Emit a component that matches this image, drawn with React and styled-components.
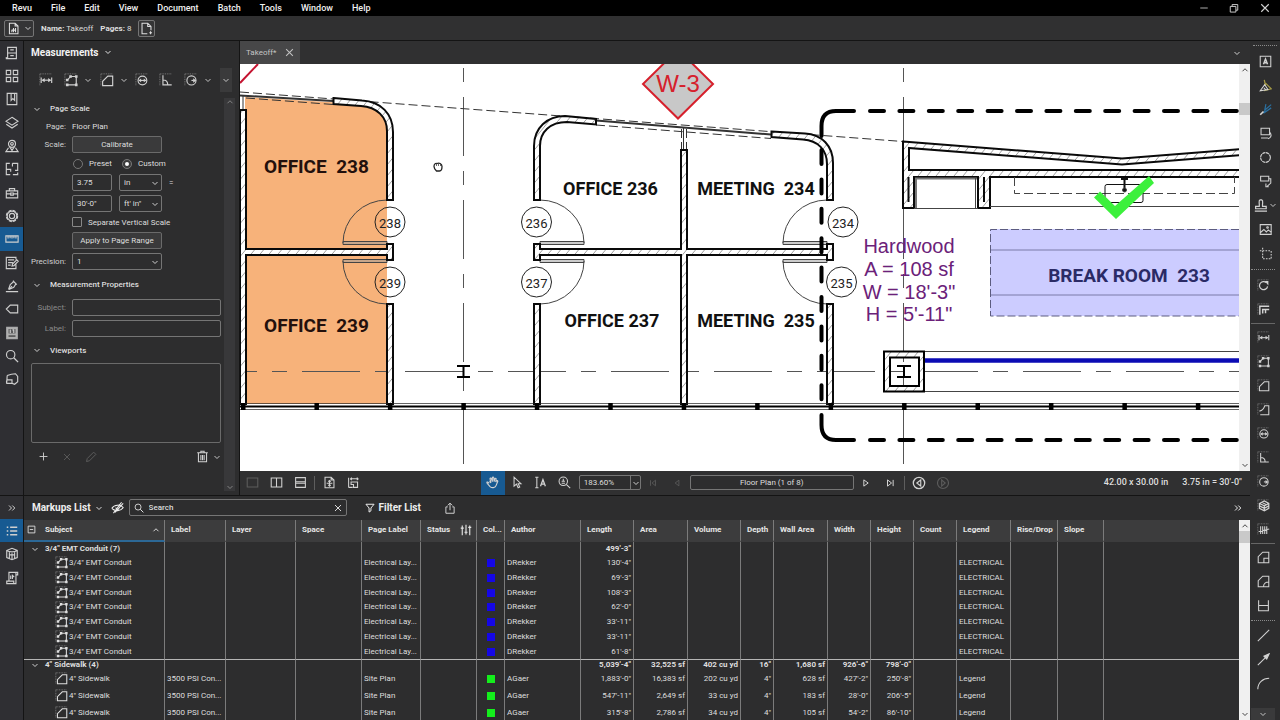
import React, { useState } from 'react';
import styled, { createGlobalStyle, css } from 'styled-components';

const colors = {
  bg: '#2d2d2e',
  bar: '#303031',
  head: '#3c3c3d',
  line: '#141414',
  grid: '#7b7b7b',
  field: '#757575',
  text: '#dedede',
  dim: '#8a8a8a',
  active: '#175a92',
};

const GlobalStyle = createGlobalStyle`
  * { box-sizing: border-box; }
  body {
    margin: 0;
    background: ${colors.bg};
    color: ${colors.text};
    font: 8px/11px Roboto, "Liberation Sans", sans-serif;
    overflow: hidden;
  }
  button, input, select { font: inherit; color: inherit; margin: 0; }
`;

/* ---------- icons ---------- */

const dots = <path d="M1 1H15M1 1V15" strokeDasharray="1 1" strokeWidth="1" opacity=".55" />;

const icons = {
  cabinet: <path d="M3 1.500H13V14.500H3ZM3 8H13M6 4.500H10M6 11H10M1.500 12.500V14.500H3" />,
  grid: <path d="M1.500 1.500H6.500V6.500H1.500ZM9.500 1.500H14.500V6.500H9.500ZM1.500 9.500H6.500V14.500H1.500ZM9.500 9.500H14.500V14.500H9.500Z" />,
  bookmark: <path d="M2.500 1.500H13.500V14.500H2.500ZM7 1.500V9.500L9 7.500L11 9.500V1.500" />,
  layers: <path d="M8 1.500L15 6L8 10.500L1 6ZM1.500 9.500L8 13.800L14.500 9.500" />,
  pin: (
    <>
      <circle cx="8" cy="5.500" r="4" />
      <circle cx="8" cy="5.500" r="1.500" />
      <path d="M5 8.500L8 13L11 8.500M4 10L1 14.500H15L12 10" />
    </>
  ),
  spaces: <path d="M5.500 1.500H1.500V14.500H6M1.500 8.500H6.500V11M8.500 1.500H14.500V9.500H11.500M8.500 1.500V5M14.500 12V14.500H9" />,
  toolbox: <path d="M1.500 5.500H14.500V13.500H1.500ZM5 5.500V3H11V5.500M1.500 9H6.500M9.500 9H14.500M6.500 8V10.500H9.500V8Z" />,
  gear: (
    <>
      <circle cx="8" cy="8" r="6.300" strokeDasharray="3.500 1.450" strokeWidth="1.600" />
      <circle cx="8" cy="8" r="5.500" />
      <circle cx="8" cy="8" r="3" />
    </>
  ),
  ruler: <path d="M1 4.500H15V11.500H1ZM3.500 4.500V7.500M5.800 4.500V7M8 4.500V7.500M10.200 4.500V7M12.500 4.500V7.500" />,
  form: <path d="M12.500 9.500V14.500H1.500V1.500H12.500V4M3.500 4.500H10.500M3.500 7.500H9M3.500 10.500H6.500M8 11.500L8.500 9.300L13.500 4.300L15.200 6L10.200 11Z" />,
  sign: <path d="M1 14.500H15M4 12L6 6.500L10 3L12.500 5.500L10 9.500L4.500 12M5 11.500L8 8M9 2L13.500 6.500" />,
  tag: <path d="M6 3.500H14.500V12.500H6L1.500 8Z" />,
  film: (
    <>
      <rect x="2" y="1.500" width="12" height="13" fill="currentColor" opacity=".8" />
      <path d="M4 3.500H12V8.500H4Z" fill="#5a5a5c" stroke="none" />
      <path d="M4 11.500H12" stroke="#2d2d2e" />
      <path d="M6 4V8M8.500 4.500H10V8" />
    </>
  ),
  search: (
    <>
      <circle cx="6.500" cy="6.500" r="4.800" />
      <path d="M10 10L15 15" strokeWidth="1.500" />
    </>
  ),
  shape: <path d="M2.500 4C5 3 9 2 12 2L14.500 5V11L11 14L8 13V9H3C1.500 9 1.500 11 2 13H8M2 12L2.500 4" />,
  length: <>{dots}<path d="M2.500 5V11.500M14.500 5V11.500" /><path d="M4 8.200H13" /><path d="M3 8.200L6.500 5.800V10.600ZM14 8.200L10.500 5.800V10.600Z" fill="currentColor" stroke="none" /></>,
  polylength: (
    <>
      {dots}
      <path d="M4 8L7.500 4H14V13.500H4" />
      <path d="M2.200 6.500H5.200V9.500H2.200ZM6 2.500H9V5.500H6ZM12.500 2.500H15.500V5.500H12.500ZM12.500 12H15.500V15H12.500ZM2.200 12H5.200V15H2.200Z" fill="currentColor" stroke="none" />
    </>
  ),
  area: <>{dots}<path d="M3 14.500V9.500L9 3.500H14.500V14.500Z" /></>,
  perimeter: <>{dots}<path d="M3 10C7 9 8.500 7 9.500 3.500H14.500V14.500H4" /></>,
  diameter: <>{dots}<circle cx="8.500" cy="8.500" r="5" /><path d="M5 8.500H12" /><path d="M4 8.500L7 6.300V10.700ZM13 8.500L10 6.300V10.700Z" fill="currentColor" stroke="none" /></>,
  angle: <>{dots}<path d="M4.500 2.500V13.500H14.500M4.500 8C8 8 10 10 10 13.500" /></>,
  radius: <>{dots}<circle cx="8.500" cy="8.500" r="5.200" /><path d="M8.500 8.500H11" /><path d="M14 8.500L10.500 6V11Z" fill="currentColor" stroke="none" /></>,
  volume: <>{dots}<path d="M3 5.500L9 2.500L14.500 5.500V11.500L9 14.500L3 11.500ZM3 5.500L9 8.500L14.500 5.500M9 8.500V14.500M3 8.500L9 11.500L14.500 8.500M6 4L11.500 7" strokeWidth="1.500" /></>,
  count: <>{dots}<path d="M4.500 4V13.500M7 4V13.500M9.500 4V13.500M12 4V13.500M2 10.500L15 7.500" strokeWidth="1.300" /></>,
  cutout: <path d="M1.500 14.500V7L7 1.500H14.500V14.500ZM8.500 14V9H14.500" />,
  cutarc: <path d="M1.500 14.500V7L7 1.500H14.500V14.500ZM8 14C8 11 11 8.500 14 8.500" />,
  tray: <path d="M2 1.500V14.500H14V1.500M2 8H14" />,
  textbox: <><path d="M1.500 1.500H14.500V14.500H1.500Z" /><path d="M5.500 11.500L8 5L10.500 11.500M6.500 9.500H9.500" strokeWidth="1.800" /></>,
  highlight: (
    <>
      <path d="M6.500 1L8 8M8 5L15 12L6 14.500" stroke="#a59a45" strokeWidth="1.500" />
      <path d="M1.500 14.500L7 7L11 13ZM6 11L8 13" />
    </>
  ),
  pen: <><path d="M15 2L8 8L5.500 12.500L15 6M8.500 1.500L7 9" stroke="#2a6f9f" strokeWidth="1.500" /><path d="M1.500 14.500L5.500 10.500" strokeWidth="2" /></>,
  rect: <path d="M2.500 1.500H13V9.500H2.500ZM2.500 13.500H11M13 6C15.500 9 16 13 11 14.500" />,
  ellipse: <circle cx="8" cy="8" r="6" strokeDasharray="4 .7" strokeWidth="1.400" />,
  callout: <path d="M2 1.500H12V7.500H2ZM12 4.500H14.500V10L10 14M8.500 10.500V14.500H12" />,
  stamp: <path d="M7.500 1C5 2 7 5 6.500 9H2V12H15V9H10.500C10 5 12 2 9.500 1ZM1 15H16" strokeWidth="1.500" />,
  image: <><path d="M1.500 2H15V14H1.500ZM1.500 12L6 8L9 11L11.500 8.500L15 11.500" /><circle cx="10.500" cy="5.500" r="1" /></>,
  crop: <path d="M1 4.500H15M4.500 1V14.500H15V4.500" strokeDasharray="2 1.500" />,
  rotate: <>{dots}<path d="M11.500 4.500A5 5 0 1 0 13 9" strokeWidth="1.500" /><path d="M9.500 2.500H14V8Z" fill="currentColor" stroke="none" /></>,
  align: <>{dots}<path d="M3.500 14.500V4H15M7 13V8H15M10.500 8V12.500" strokeWidth="1.800" /></>,
  line: <path d="M1 15L15 1" />,
  arrow: <><path d="M1 15L11 5" /><path d="M15 1L8.500 4L12 7.500Z" fill="currentColor" /></>,
  arc: <path d="M1 15C1 7 7 1.500 15 1.500" />,
  page: <path d="M1.500 2.500H14.500V13.500H1.500Z" />,
  splitv: <path d="M1.500 2.500H14.500V13.500H1.500ZM8 2.500V13.500" />,
  splith: <path d="M2 2H14V14H2ZM2 7H14M2 9H14" />,
  fit: <path d="M2.500 1.500H10L13.500 5V14.500H2.500ZM10 1.500V5H13.500M8 5.500V12.500M4.500 9H11.500M6.500 7L8 5.500L9.500 7M6.500 11L8 12.500L9.500 11" />,
  fitw: <path d="M2 2V14M2 14H7M4 3.500H14M4 3.500L6 2M4 3.500L6 5M14 3.500L12 2M14 3.500L12 5M5 7.500H13V14H8V10.500H5Z" />,
  hand: <path d="M4 9L2 7.500C1 7 .8 8.500 1.500 9L5 13C7 15 11.500 15 12.500 11.500L14.500 6.500C14.500 5.500 13 5.200 12.500 6.500L12 7.500L12.500 3.500C12.300 2.500 11 2.500 10.800 3.500L10 7L9.500 2C9.300 1 8 1 7.800 2V7L6.500 3C6 2 4.800 2.500 5 3.500L6 8.500L4.500 6" fill="#175a92" strokeWidth="1.400" />,
  cursor: <path d="M5 1.500V12.500L8 10L10 14.500L12 13.500L10 9.500H13.500Z" />,
  textsel: <><path d="M1.500 1.500H5.500M3.500 1.500V14.500M1.500 14.500H5.500" /><path d="M8 12.500L11 4.500L14 12.500M9 10H13" strokeWidth="1.600" /></>,
  zoom: <><circle cx="6.500" cy="6.500" r="5.200" /><path d="M10.500 10.500L15 15M4.500 6.500H8.500M4.500 9H8.500M6.500 3.500V6" /></>,
  first: <path d="M4 3.500V12.500M12 3.500V12.500L6.500 8Z" />,
  prev: <path d="M11 3.500V12.500L5 8Z" />,
  next: <path d="M4.500 3V13L11.500 8Z" strokeWidth="1.600" />,
  last: <path d="M13 3V13M4 3V13L10.500 8Z" strokeWidth="1.600" />,
  back: <><circle cx="8" cy="8" r="6.500" strokeWidth="1.500" /><path d="M10 4.500V11.500L5.500 8Z" /></>,
  forward: <><circle cx="8" cy="8" r="6.300" /><path d="M6.500 4.500V11.500L10.500 8Z" /></>,
  chevron: <path d="M3 6L8 11L13 6" strokeWidth="1.800" />,
  up: <path d="M3 10.500L8 5.500L13 10.500" strokeWidth="1.800" />,
  close: <path d="M2 2L14 14M14 2L2 14" strokeWidth="1.800" />,
  minimize: <path d="M2 8H14" />,
  restore: <path d="M2 5.500H11V14.500H2ZM5 5.500V2.500H14V11.500H11" strokeWidth="1.500" />,
  list: <path d="M1 3H3M5.500 3H15M1 8H3M5.500 8H15M1 13H3M5.500 13H15" strokeWidth="2" />,
  cube: <path d="M2 4L8 1.500L14 4V12L8 14.500L2 12ZM2 4C5 6 11 6 14 4M5 6V13M8 7V14M11 6V13M5.500 9H10.500" />,
  script: <path d="M4.500 11V1.500H14.500V4.500H12.500V14.500H2V11.500H10V14.500M12.500 4.500V1.500M6.500 5V9M8.500 9V5L10.500 7" />,
  eyeoff: <path d="M1 9C4 4 12 4 15 8C12 13 5 13 1 9M3 15L13 1.500M6 8C6 11 10 11 10 8M5 14L15 3" />,
  filter: <path d="M1.500 2H14.500L9.500 8V12.500L6.500 14.500V8Z" strokeWidth="1.600" />,
  share: <path d="M5 6.500H2.500V15H13.500V6.500H11M8 11V1.500M5 4.500L8 1.500L11 4.500" />,
  sliders: <path d="M3 2V15M8 1V14M13 2V15M1 5.500H5M6 11H10M11 4.500H15" strokeWidth="1.500" />,
  minusbox: <path d="M2 2H14V14H2ZM5 8H11" strokeWidth="1.500" />,
  plus: <path d="M8 1V15M1 8H15" strokeWidth="1.600" />,
  pencil: <path d="M2 14L3 10L11.500 1.500L14.500 4.500L6 13Z" />,
  trash: <path d="M1.500 3.500H14.500M6 3.500V1.500H10V3.500M3 3.500V14.500H13V3.500M6 6V12.500M8 6V12.500M10 6V12.500" />,
  more: <path d="M2 3L7 8L2 13M8.500 3L13.500 8L8.500 13" strokeWidth="2" />,
  docset: <path d="M3 1.500H10L13.500 5V14.500H3ZM10 1.500V5H13.500M6 12.500V9.500M8 12.500V7.500M10.500 12.500V7.500M6 10H10.500" />,
  newpage: <path d="M9 14.500H2.500V1.500H9.500L13.500 5.500V10M9.500 1.500V5.500H13.500M13 11.500V15M11.500 13.200H14.800" />,
};

const Svg = styled.svg`
  flex: none;
  display: block;
  fill: none;
  stroke: currentColor;
  stroke-width: 1.3;
`;

const Icon = ({ name, size = 14 }) => (
  <Svg width={size} height={size} viewBox="0 0 16 16" aria-hidden="true">
    {icons[name]}
  </Svg>
);

/* ---------- shared parts ---------- */

const Window = styled.div`
  display: flex;
  flex-direction: column;
  height: 100vh;
`;

const Spacer = styled.div`
  flex: ${(p) => p.$grow || 1};
`;

const PlainButton = styled.button`
  display: flex;
  align-items: center;
  justify-content: center;
  gap: 4px;
  flex: none;
  padding: 0;
  border: 0;
  background: none;
  cursor: pointer;
`;

const IconButton = styled(PlainButton)`
  width: ${(p) => p.$width || 24}px;
  height: ${(p) => p.$height || 24}px;
  background: ${(p) => (p.$active ? colors.active : 'transparent')};
  color: ${(p) => (p.$dim ? '#5c5c5c' : '#d2d2d2')};
`;

const BoxButton = styled(PlainButton)`
  height: 17px;
  border: 1px solid ${colors.field};
  border-radius: 2px;
  background: #353536;
`;

const Divider = styled.div`
  flex: none;
  width: 1px;
  height: 14px;
  margin: 0 2px;
  background: #5e5e5e;
`;

/* ---------- menu and document bar ---------- */

const MenuBar = styled.nav`
  display: flex;
  align-items: center;
  gap: 19px;
  flex: none;
  height: 16px;
  padding-left: 12px;
  background: #000;
  color: #f0f0f0;
  font-size: 9px;
  font-weight: 500;
`;

const WindowButtons = styled.div`
  display: flex;
  margin-left: auto;
`;

const DocBar = styled.header`
  display: flex;
  align-items: center;
  gap: 7px;
  flex: none;
  height: 25px;
  padding-left: 4px;
  border-bottom: 1px solid ${colors.line};
  background: ${colors.bar};
`;

const DocMenu = styled(BoxButton)`
  width: 30px;
`;

const AddPage = styled(BoxButton)`
  width: 17px;
`;

/* ---------- body layout ---------- */

const Body = styled.div`
  display: flex;
  flex: 1;
  min-height: 0;
`;

const Left = styled.div`
  display: flex;
  flex-direction: column;
  flex: 1;
  min-width: 0;
`;

const Upper = styled.div`
  display: flex;
  flex: 1;
  min-height: 0;
`;

const Lower = styled.div`
  display: flex;
  flex: 0 0 225px;
  min-height: 0;
  border-top: 1px solid ${colors.line};
`;

const Rail = styled.aside`
  display: flex;
  flex-direction: column;
  flex: 0 0 24px;
  border-right: 1px solid ${colors.line};
  background: #2f2f33;
`;

const RailButton = styled(PlainButton)`
  height: 23px;
  color: #cfcfcf;
  background: ${(p) => (p.$active ? colors.active : 'none')};
  &:nth-child(3n) {
    height: 24px;
  }
`;

/* ---------- measurements panel ---------- */

const Panel = styled.section`
  display: flex;
  flex-direction: column;
  flex: 0 0 216px;
  border-right: 1px solid ${colors.line};
`;

const PanelTitle = styled.h2`
  display: flex;
  align-items: center;
  gap: 6px;
  height: 22px;
  margin: 0;
  padding-left: 7px;
  font-size: 10px;
  font-weight: 700;
  color: #f2f2f2;
`;

const ToolRow = styled.div`
  display: flex;
  align-items: center;
  height: 33px;
  padding-left: 12px;
  > button {
    gap: 6px;
  }
`;

const More = styled(IconButton)`
  background: #3a3a3b;
`;

const PanelBody = styled.div`
  display: flex;
  flex: 1;
  min-height: 0;
`;

const PanelForm = styled.form`
  flex: 1;
  min-width: 0;
  padding: 0 3px 0 7px;
`;

const PanelScroll = styled.div`
  display: flex;
  flex-direction: column;
  justify-content: space-between;
  align-items: center;
  width: 11px;
  margin: 2px 4px 4px 0;
  background: #38383a;
  color: ${colors.dim};
`;

const SectionTitle = styled.h3`
  display: flex;
  align-items: center;
  gap: 9px;
  height: ${(p) => p.$height}px;
  margin: 0;
  padding-left: 2px;
  font-size: 8px;
  font-weight: 500;
`;

const Rows = styled.div`
  display: flex;
  flex-direction: column;
  gap: 4px;
`;

const Row = styled.div`
  display: grid;
  grid-template-columns: 35px 1fr;
  align-items: center;
  column-gap: 6px;
  height: ${(p) => p.$height || 17}px;
`;

const RowLabel = styled.label`
  justify-self: end;
  white-space: nowrap;
  color: ${(p) => (p.$dim ? colors.dim : '#d0d0d0')};
`;

const Field = styled.div`
  grid-column: 2;
  display: flex;
  align-items: center;
  gap: ${(p) => p.$gap || 7}px;
`;

const fieldBox = css`
  height: 17px;
  border: 1px solid ${colors.field};
  border-radius: 2px;
  background: ${colors.bg};
  outline: 0;
`;

const TextField = styled.input`
  ${fieldBox}
  width: ${(p) => p.$width || '40px'};
  padding: 0 4px;
`;

const SelectWrap = styled.span`
  display: grid;
  align-items: center;
  width: ${(p) => p.$width}px;
  > * {
    grid-area: 1 / 1;
  }
  > svg {
    justify-self: end;
    margin-right: 3px;
    pointer-events: none;
  }
`;

const SelectBox = styled.select`
  ${fieldBox}
  width: 100%;
  padding: 0 4px;
  appearance: none;
`;

const Select = ({ width, options, ...rest }) => (
  <SelectWrap $width={width}>
    <SelectBox {...rest}>
      {options.map((o) => <option key={o}>{o}</option>)}
    </SelectBox>
    <Icon name="chevron" size={8} />
  </SelectWrap>
);

const WideButton = styled(BoxButton)`
  width: 90px;
  border-color: #6a6a6a;
  background: #3a3a3b;
`;

const Choice = styled.label`
  display: flex;
  align-items: center;
  gap: 6px;
  white-space: nowrap;
`;

const Radio = styled.input`
  appearance: none;
  width: 10px;
  height: 10px;
  margin: 0 0 0 1px;
  border: 1px solid #777;
  border-radius: 50%;
  &:checked {
    border: 3px solid #3c3c3c;
    outline: 1px solid #777;
    outline-offset: -1px;
    background: #fff;
  }
`;

const Check = styled.input`
  appearance: none;
  width: 10px;
  height: 10px;
  margin: 0;
  border: 1px solid #888;
  border-radius: 1px;
`;

const Viewports = styled.div`
  height: 80px;
  border: 1px solid #6a6a6a;
  border-radius: 2px;
`;

const EditRow = styled.div`
  display: flex;
  align-items: center;
  height: 27px;
`;

/* ---------- document area ---------- */

const DocArea = styled.main`
  display: flex;
  flex-direction: column;
  flex: 1;
  min-width: 0;
`;

const Tabs = styled.div`
  display: flex;
  align-items: center;
  flex: none;
  height: 23px;
  padding-right: 9px;
  background: ${colors.bar};
`;

const Tab = styled.div`
  display: flex;
  align-items: center;
  gap: 9px;
  height: 23px;
  padding: 0 6px;
  background: #474748;
  color: #c4c4c4;
`;

const Viewer = styled.div`
  display: flex;
  flex: 1;
  min-height: 0;
  background: #fff;
`;

const Plan = styled.svg`
  flex: 1;
  min-width: 0;
  height: 100%;
`;

const ScrollBar = styled.div`
  display: flex;
  flex-direction: column;
  align-items: center;
  flex: 0 0 11px;
  background: #f0f0f0;
  color: #333;
  padding: 2px 0;
  > :last-child {
    margin-top: auto;
  }
`;

const Thumb = styled.div`
  flex: 0 0 12px;
  width: 100%;
  margin-top: ${(p) => p.$gap}px;
  background: #c9c9c9;
`;

const StatusBar = styled.footer`
  display: flex;
  align-items: center;
  flex: none;
  height: 24px;
  padding: 0 8px 1px 0;
  background: ${colors.bar};
`;

const PageBox = styled.input`
  ${fieldBox}
  height: 15px;
  width: 164px;
  margin-left: 1px;
  text-align: center;
`;

const ZoomSelect = styled(SelectWrap)`
  margin: 0 0 0 2px;
  ${SelectBox} {
    height: 15px;
  }
`;

const ZoomArrow = styled.span`
  justify-self: end;
  display: flex;
  align-items: center;
  height: 15px;
  padding: 0 1px;
  border-left: 1px solid ${colors.field};
  pointer-events: none;
`;

const Info = styled.span`
  margin-left: 14px;
  white-space: nowrap;
  font-size: 9px;
  font-weight: 500;
`;

const PlanLabel = styled.text`
  font: 700 ${(p) => p.$size || 19}px Roboto, "Liberation Sans", sans-serif;
  fill: ${(p) => p.$fill || '#111'};
  text-anchor: middle;
`;

const DoorNumber = styled.text`
  font: 13px Roboto, "Liberation Sans", sans-serif;
  fill: #222;
  text-anchor: middle;
`;

const Note = styled.text`
  font: ${(p) => p.$size || 20}px "Liberation Sans", sans-serif;
  fill: ${(p) => p.$fill || '#6b2179'};
  text-anchor: middle;
`;

// x, y, width, height of every straight wall
const walls = [
  [240, 110, 6, 294],
  [240, 249, 152, 6],
  [387, 244, 6, 16],
  [387, 304, 6, 100],
  [534, 244, 6, 16],
  [534, 304, 6, 100],
  [534, 249, 299, 6],
  [681, 150, 6, 254],
  [827, 244, 6, 16],
  [827, 304, 6, 100],
  [903, 170, 340, 7],
  [903, 142, 6, 34],
  [903, 170, 11, 38],
  [978, 170, 12, 38],
];

const curvedWalls = [
  'M333.5 98L362 100.500C381 101.500 393 114 393 132V200H387V131C387 117 377 107 361 106L333.500 104Z',
  'M534 200V146C534 128 547 116 565 116L596 119V124.500L567 122C550 122 540 132 540 146V200Z',
  'M771.500 131.500L805 133.500C822 134.500 833 146 833 163V200H827V164C827 150 818 140.500 803 139.500L771.500 137Z',
  'M903 141.500L1122 158.500L1243 149V155L1122 164.500L903 147.500Z',
];

const doors = [
  { x: 387, dir: -1 },
  { x: 540, dir: 1 },
  { x: 827, dir: -1 },
];

const tags = [
  [390, 222, '238'], [390, 282, '239'], [536.5, 222, '236'],
  [536.5, 282, '237'], [843, 222, '234'], [841.5, 282, '235'],
];

const mullions = Array.from({ length: 14 }, (_, i) => 243 + i * 73.45);

const FloorPlan = () => (
  <Plan viewBox="240 64 999 407" preserveAspectRatio="xMinYMin slice" role="img" aria-label="Floor plan">
    <defs>
      <pattern id="hatch" width="9" height="11" patternUnits="userSpaceOnUse">
        <rect width="9" height="11" fill="#fff" />
        <path d="M0 11L9 0M-4.500 5.500L4.500 -5.500M4.500 16.500L13.500 5.500" stroke="#888" strokeWidth=".8" />
      </pattern>
    </defs>

    <path d="M245 97L361 104C377 105 387 117 387 131V404H245Z" fill="#f7b27a" />
    <rect x="990" y="229" width="260" height="87" fill="#ccccff" />

    {/* column centre lines */}
    <g stroke="#555" strokeWidth="1" fill="none">
      <path d="M463.500 68V464M903.500 68V464" strokeDasharray="14 15 59 15" />
      <path d="M463.500 409V464M903.500 409V464" />
      <path d="M169 371.500H1239" strokeDasharray="15 15 58 15" />
    </g>

    {/* glazing line */}
    <g stroke="#333" fill="none">
      <path d="M240 92L903 141.500M246 98L333 104.500M596 125L771 138.500M681.500 129V150M686.500 129V150" strokeDasharray="9 4" />
      <path d="M240 95.500L333 101M596 120.500L771 134.500" strokeWidth="2" />
      <path d="M683.500 128V150M243 96V110" />
    </g>

    {doors.map(({ x, dir }) => (
      <g key={x} stroke="#444" fill="none">
        <path d={`M${x} 200A44 43 0 0 ${dir > 0 ? 1 : 0} ${x + 44 * dir} 243M${x} 304A44 43 0 0 ${dir > 0 ? 0 : 1} ${x + 44 * dir} 261`} />
        <path d={`M${x} 241.500H${x + 44 * dir}V244.500H${x}ZM${x} 259.500H${x + 44 * dir}V262.500H${x}Z`} fill="#999" fillOpacity=".5" />
      </g>
    ))}

    {/* walls: outlines first, then the fill on top so that joints stay open */}
    <g fill="#fff" stroke="#0a0a0a" strokeWidth="2">
      {walls.map(([x, y, w, h]) => <rect key={`${x}-${y}-${w}`} x={x} y={y} width={w} height={h} />)}
      {curvedWalls.map((d) => <path key={d} d={d} fill="url(#hatch)" />)}
    </g>
    <g fill="url(#hatch)">
      {walls.map(([x, y, w, h]) => (
        <rect key={`${x}-${y}-${w}`} x={x + 1} y={y + 1} width={w - 2} height={h - 2} />
      ))}
    </g>
    <path d="M908.500 177V202M984 177V202" stroke="#0a0a0a" strokeWidth="2" />

    {/* outside wall */}
    <g stroke="#222">
      <path d="M240 403.500H1239M240 409.500H1239" strokeWidth=".7" />
      <path d="M240 406.500H1239" strokeWidth="2" stroke="#000" />
    </g>
    {mullions.map((x) => <rect key={x} x={x - 2} y="403" width="4.500" height="7" />)}

    {/* counter and sink */}
    <g fill="none" stroke="#444">
      <path d="M916 208V178.500H977" stroke="#777" strokeWidth="2" />
      <path d="M975.500 178V208M914 208.500H978M990 206.500H1239" />
      <path d="M1014.500 177V193.500H1234.500V177" strokeDasharray="9 4" />
      <rect x="1105" y="184.500" width="38" height="18" rx="2" stroke="#111" />
      <path d="M1121 179H1128M1124.500 179V190" stroke="#111" strokeWidth="2" />
      <circle cx="1124.500" cy="190" r="2" fill="#111" />
    </g>
    <path d="M1094 197.500L1100 191.500L1115 206L1149 176L1154 183L1116 219Z" fill="#3cf03c" />

    <g fill="none" stroke="#7b7ba8">
      <path d="M990 250H1239M990 295H1239" />
      <path d="M1239 229.500H990.500V316H1239" strokeDasharray="8 3" stroke="#5c5c80" />
    </g>

    {/* steel columns */}
    <path fillRule="evenodd" d="M884 351.500H924V391.500H884ZM890 357.500H919V386H890Z" fill="url(#hatch)" stroke="#000" strokeWidth="2" />
    <path d="M457 366H470M463.500 366V377M457 377H470M897 366H911M904 366V377M897 377H911" stroke="#000" strokeWidth="2" fill="none" />
    <path d="M925 351.500H1239M925 391.500H1239" stroke="#444" />
    <path d="M925 360.500H1239" stroke="#0b0bb4" strokeWidth="4.500" />

    {/* match line */}
    <g fill="none" stroke="#000" strokeWidth="4" strokeLinecap="round">
      <path d="M821.500 136V126Q821.500 111 836 111H854M821.500 415V425Q821.500 440 836 440H854" />
      <path d="M821.500 150V400M870 111H1239M870 440H1239" strokeDasharray="14 15.400" />
    </g>

    <path d="M240 83L258 64" stroke="#c4122f" strokeWidth="2" />
    <path d="M678 49.500L713 84L678 118.500L643 84Z" fill="#c8c8c8" stroke="#d6202c" strokeWidth="2" />
    <Note x="678" y="92" $size={24} $fill="#d6202c">W-3</Note>

    {tags.map(([x, y, n]) => (
      <g key={n}>
        <circle cx={x} cy={y} r="15" fill="none" stroke="#222" />
        <DoorNumber x={x} y={y + 5.5}>{n}</DoorNumber>
      </g>
    ))}

    <PlanLabel x="316.500" y="172.500" $fill="#23100c">{'OFFICE\u00a0 238'}</PlanLabel>
    <PlanLabel x="316.500" y="331.500" $fill="#23100c">{'OFFICE\u00a0 239'}</PlanLabel>
    <PlanLabel x="610.500" y="195" $size={18}>OFFICE 236</PlanLabel>
    <PlanLabel x="612" y="326.500" $size={18}>OFFICE 237</PlanLabel>
    <PlanLabel x="756" y="195" $size={18}>{'MEETING\u00a0 234'}</PlanLabel>
    <PlanLabel x="756" y="326.500" $size={18}>{'MEETING\u00a0 235'}</PlanLabel>
    <PlanLabel x="1129" y="281.500" $fill="#2b2b66">{'BREAK ROOM\u00a0 233'}</PlanLabel>

    <Note x="909" y="253">Hardwood</Note>
    <Note x="909" y="276">A = 108 sf</Note>
    <Note x="909" y="298.500">W = 18'-3"</Note>
    <Note x="909" y="321">H = 5'-11"</Note>

    <path d="M434 166.500C434 164 435.500 163 437 163.500C439 162.500 442 163.500 442 166.500C442 169 441 171 439.500 171H436.500C435.500 170 434 168.500 434 166.500Z" fill="#fff" stroke="#222" strokeWidth="1.300" />
    <path d="M436.500 163.500V166M438.500 163V166M440.500 163.500V166" stroke="#444" strokeWidth=".8" />
  </Plan>
);

/* ---------- markups list ---------- */

const Markups = styled.section`
  display: flex;
  flex-direction: column;
  flex: 1;
  min-width: 0;
`;

const MarkupsBar = styled.div`
  display: flex;
  align-items: center;
  flex: none;
  height: 24px;
  padding: 0 8px 1px;
  font-size: 10px;
  font-weight: 700;
  color: #ededed;
`;

const MarkupsTitle = styled(PlainButton)`
  gap: 4px;
  margin-right: 8px;
`;

const SearchBox = styled.label`
  display: flex;
  align-items: center;
  gap: 5px;
  width: 218px;
  height: 17px;
  margin: 0 18px 0 5px;
  padding: 0 4px;
  border: 1px solid ${colors.field};
  border-radius: 2px;
`;

const SearchInput = styled.input`
  flex: 1;
  min-width: 0;
  padding: 0;
  border: 0;
  background: none;
  outline: 0;
  font-size: 8px;
  font-weight: 500;
  &::placeholder {
    color: #dcdcdc;
  }
`;

const ShareButton = styled(IconButton)`
  margin-left: 17px;
`;

const TableArea = styled.div`
  display: flex;
  flex: 1;
  min-height: 0;
`;

const TableClip = styled.div`
  flex: 1;
  min-width: 0;
  overflow: hidden;
  background: linear-gradient(${colors.head} 22px, ${colors.bg} 22px);
`;

const Table = styled.table`
  width: 100%;
  table-layout: fixed;
  border-collapse: separate;
  border-spacing: 0;
  font-size: 8px;
  line-height: 10px;
  white-space: nowrap;
`;

const Th = styled.th`
  height: 22px;
  padding: 0 2px 1px 6px;
  border-right: 1px solid ${colors.grid};
  border-bottom: 2px solid ${(p) => (p.$sorted ? '#2c6896' : 'transparent')};
  text-align: left;
  font-weight: 700;
  overflow: hidden;
  color: #e6e6e6;
  &:last-child {
    border-right: 0;
  }
`;

const HeadCell = styled.div`
  display: flex;
  align-items: center;
  justify-content: space-between;
  padding-right: 2px;
  > span {
    display: flex;
    align-items: center;
    gap: 9px;
  }
`;

const SubjectHead = styled(HeadCell)`
  margin-left: -3px;
`;

const Tr = styled.tr`
  height: ${(p) => p.$height}px;
  font-weight: ${(p) => (p.$group ? 700 : 400)};
  ${(p) => p.$alternate && css`
    &:nth-child(5) {
      height: 14px;
    }
  `}
`;

const Td = styled.td`
  padding: 0 2px;
  border-right: 1px solid ${colors.grid};
  border-top: ${(p) => (p.$rule ? '1px solid #b5b5b5' : '0')};
  text-align: ${(p) => p.$align || 'left'};
  overflow: hidden;
  line-height: 10px;
  &:last-child {
    border-right: 0;
  }
`;

const Subject = styled.div`
  display: flex;
  align-items: center;
  gap: ${(p) => (p.$group ? 6 : 1)}px;
  height: 10px;
  padding-left: ${(p) => (p.$group ? 5 : 29)}px;
`;

const Swatch = styled.div`
  width: 8px;
  height: 8px;
  margin: 0 auto;
  background: ${(p) => p.$color};
`;

const columns = [
  ['Subject', 141], ['Label', 61], ['Layer', 70], ['Space', 66], ['Page Label', 59], ['Status', 56],
  ['Col...', 28], ['Author', 76], ['Length', 53], ['Area', 54], ['Volume', 53], ['Depth', 33],
  ['Wall Area', 54], ['Width', 43], ['Height', 43], ['Count', 43], ['Legend', 54],
  ['Rise/Drop', 47], ['Slope', 46], ['', 0],
];

const conduit = (length) => ({ 'Page Label': 'Electrical Lay...', 'Col...': '#1507e6', Author: 'DRekker', Length: length, Legend: 'ELECTRICAL' });

const sidewalk = (Length, Area, Volume, wall, Width, Height) => ({
  Label: '3500 PSI Con...', 'Page Label': 'Site Plan', 'Col...': '#14ee1c', Author: 'AGaer',
  Length, Area, Volume, Depth: '4"', 'Wall Area': wall, Width, Height, Legend: 'Legend',
});

const groups = [
  {
    name: '3/4" EMT Conduit',
    count: 7,
    icon: 'polylength',
    headHeight: 13,
    rowHeight: 15,
    totals: { Length: '499\'-3"' },
    rows: ['130\'-4"', '69\'-3"', '108\'-3"', '62\'-0"', '33\'-11"', '33\'-11"', '61\'-8"'].map(conduit),
  },
  {
    name: '4" Sidewalk',
    count: 4,
    icon: 'area',
    headHeight: 11,
    rowHeight: 17,
    totals: { Length: '5,039\'-4"', Area: '32,525 sf', Volume: '402 cu yd', Depth: '16"', 'Wall Area': '1,680 sf', Width: '926\'-6"', Height: '798\'-0"' },
    rows: [
      sidewalk('1,883\'-0"', '16,383 sf', '202 cu yd', '628 sf', '427\'-2"', '250\'-8"'),
      sidewalk('547\'-11"', '2,649 sf', '33 cu yd', '183 sf', '28\'-0"', '206\'-5"'),
      sidewalk('315\'-8"', '2,786 sf', '34 cu yd', '105 sf', '54\'-2"', '86\'-10"'),
    ],
  },
];

const numeric = ['Length', 'Area', 'Volume', 'Depth', 'Wall Area', 'Width', 'Height'];

const Cells = ({ row, rule, subject }) => columns.map(([name]) => (
  <Td key={name} $rule={rule} $align={numeric.includes(name) ? 'right' : 'left'}>
    {name === 'Subject' && subject}
    {name === 'Col...' && row[name] && <Swatch $color={row[name]} />}
    {name !== 'Subject' && name !== 'Col...' && row[name]}
  </Td>
));

const MarkupsTable = () => (
  <Table>
    <colgroup>
      {columns.map(([name, width]) => <col key={name} width={width || undefined} />)}
    </colgroup>
    <thead>
      <tr>
        {columns.map(([name]) => (
          <Th key={name} scope="col" $sorted={name === 'Subject'}>
            {name === 'Subject' ? (
              <SubjectHead><span><Icon name="minusbox" size={9} />{name}</span><Icon name="up" size={8} /></SubjectHead>
            ) : (
              <HeadCell>{name}{name === 'Status' && <Icon name="sliders" size={12} />}</HeadCell>
            )}
          </Th>
        ))}
      </tr>
    </thead>
    {groups.map((group, i) => (
      <tbody key={group.name}>
        <Tr $group $height={group.headHeight}>
          <Cells
            row={group.totals}
            rule={i > 0}
            subject={<Subject $group><Icon name="chevron" size={8} />{`${group.name} (${group.count})`}</Subject>}
          />
        </Tr>
        {group.rows.map((row, n) => (
          <Tr key={n} $height={group.rowHeight} $alternate={i === 0}>
            <Cells row={row} subject={<Subject><Icon name={group.icon} size={13} />{group.name}</Subject>} />
          </Tr>
        ))}
      </tbody>
    ))}
  </Table>
);

/* ---------- right toolbar ---------- */

const ToolBar = styled.aside`
  display: flex;
  flex-direction: column;
  flex: 0 0 30px;
  overflow: hidden;
  background: ${colors.bg};
`;

const ToolGroup = styled.div`
  display: flex;
  flex-direction: column;
  flex: none;
  padding-left: 3px;
  & + & {
    padding-left: 1px;
  }
`;

const Grip = styled.div`
  flex: none;
  width: 24px;
  height: ${(p) => p.$height}px;
  display: flex;
  align-items: center;
  &::before {
    content: "";
    width: 100%;
    border-top: ${(p) => (p.$solid ? '1px solid #666' : '1px dotted #8a8a8a')};
  }
`;

const ToolButton = styled(IconButton)`
  gap: 2px;
`;

const OverflowButton = styled(IconButton)`
  margin: auto 0 0 1px;
  background: #3a3a3b;
`;

const railTools = ['cabinet', 'grid', 'bookmark', 'layers', 'pin', 'spaces', 'toolbox', 'gear', 'ruler', 'form', 'sign', 'tag', 'film', 'search', 'shape'];

const toolGroups = [
  { grip: 8, tools: ['textbox', 'highlight', 'pen', 'rect', 'ellipse', 'callout', 'stamp', 'image', 'crop'] },
  { grip: 8, tools: ['rotate', 'align'] },
  { grip: 4, solid: true, tools: ['length', 'polylength', 'area', 'perimeter', 'diameter', 'angle', 'radius', 'volume', 'count'] },
  { grip: 4, solid: true, tools: ['cutout', 'cutarc', 'tray'] },
  { grip: 6, tools: ['line', 'arrow', 'arc'] },
];

const App = () => {
  const [tool, setTool] = useState('ruler');
  const [mode, setMode] = useState('custom');

  return (
    <Window>
      <GlobalStyle />
      <MenuBar>
        {['Revu', 'File', 'Edit', 'View', 'Document', 'Batch', 'Tools', 'Window', 'Help'].map((m) => (
          <PlainButton key={m}>{m}</PlainButton>
        ))}
        <WindowButtons>
          <IconButton $width={30} $height={16} aria-label="Minimize"><Icon name="minimize" size={10} /></IconButton>
          <IconButton $width={30} $height={16} aria-label="Restore"><Icon name="restore" size={10} /></IconButton>
          <IconButton $width={31} $height={16} aria-label="Close"><Icon name="close" size={10} /></IconButton>
        </WindowButtons>
      </MenuBar>
      <DocBar>
        <DocMenu aria-label="Document set"><Icon name="docset" size={13} /><Icon name="chevron" size={8} /></DocMenu>
        <span><b>Name:</b> Takeoff</span>
        <span><b>Pages:</b> 8</span>
        <AddPage aria-label="Add page"><Icon name="newpage" size={13} /></AddPage>
      </DocBar>

      <Body>
        <Left>
          <Upper>
            <Rail>
              {railTools.map((name) => (
                <RailButton key={name} aria-label={name} $active={tool === name} onClick={() => setTool(name)}>
                  <Icon name={name} />
                </RailButton>
              ))}
            </Rail>

            <Panel>
              <PanelTitle>Measurements <Icon name="chevron" size={8} /></PanelTitle>
              <ToolRow>
                <IconButton $width={20} aria-label="Length"><Icon name="length" /></IconButton>
                <IconButton $width={44} aria-label="Polylength"><Icon name="polylength" /><Icon name="chevron" size={8} /></IconButton>
                <IconButton $width={28} aria-label="Area"><Icon name="area" /><Icon name="chevron" size={8} /></IconButton>
                <IconButton $width={28} aria-label="Diameter"><Icon name="diameter" /></IconButton>
                <IconButton $width={20} aria-label="Angle"><Icon name="angle" /></IconButton>
                <IconButton $width={44} aria-label="Radius"><Icon name="radius" /><Icon name="chevron" size={8} /></IconButton>
                <More $width={12} aria-label="More tools"><Icon name="chevron" size={8} /></More>
              </ToolRow>
              <PanelBody>
                <PanelForm onSubmit={(e) => e.preventDefault()}>
                  <SectionTitle $height={25}><Icon name="chevron" size={8} />Page Scale</SectionTitle>
                  <Rows>
                    <Row $height={11}><RowLabel as="span">Page:</RowLabel><span>Floor Plan</span></Row>
                    <Row><RowLabel htmlFor="calibrate">Scale:</RowLabel><WideButton id="calibrate">Calibrate</WideButton></Row>
                    <Row $height={13}>
                      <Field $gap={9}>
                        <Choice><Radio type="radio" name="mode" checked={mode === 'preset'} onChange={() => setMode('preset')} />Preset</Choice>
                        <Choice><Radio type="radio" name="mode" checked={mode === 'custom'} onChange={() => setMode('custom')} />Custom</Choice>
                      </Field>
                    </Row>
                    <Row>
                      <Field>
                        <TextField aria-label="Page distance" defaultValue="3.75" />
                        <Select width={43} aria-label="Page unit" options={['in']} />
                        <span>=</span>
                      </Field>
                    </Row>
                    <Row>
                      <Field>
                        <TextField aria-label="Real distance" defaultValue={'30\'-0"'} />
                        <Select width={43} aria-label="Real unit" options={['ft\' in"']} />
                      </Field>
                    </Row>
                    <Row $height={12}>
                      <Field><Choice><Check type="checkbox" />Separate Vertical Scale</Choice></Field>
                    </Row>
                    <Row><Field><WideButton>Apply to Page Range</WideButton></Field></Row>
                    <Row>
                      <RowLabel htmlFor="precision">Precision:</RowLabel>
                      <Select id="precision" width={90} options={['1']} />
                    </Row>
                  </Rows>
                  <SectionTitle $height={29}><Icon name="chevron" size={8} />Measurement Properties</SectionTitle>
                  <Rows>
                    <Row><RowLabel $dim htmlFor="subject">Subject:</RowLabel><TextField id="subject" $width="100%" /></Row>
                    <Row><RowLabel $dim htmlFor="label">Label:</RowLabel><TextField id="label" $width="100%" /></Row>
                  </Rows>
                  <SectionTitle $height={26}><Icon name="chevron" size={8} />Viewports</SectionTitle>
                  <Viewports />
                  <EditRow>
                    <IconButton aria-label="Add viewport"><Icon name="plus" size={9} /></IconButton>
                    <IconButton $dim aria-label="Remove viewport"><Icon name="close" size={8} /></IconButton>
                    <IconButton $dim aria-label="Edit viewport"><Icon name="pencil" size={12} /></IconButton>
                    <Spacer />
                    <IconButton $width={26} aria-label="Delete"><Icon name="trash" size={13} /><Icon name="chevron" size={8} /></IconButton>
                  </EditRow>
                </PanelForm>
                <PanelScroll><Icon name="up" size={8} /><Icon name="chevron" size={8} /></PanelScroll>
              </PanelBody>
            </Panel>

            <DocArea>
              <Tabs>
                <Tab>Takeoff*<PlainButton aria-label="Close tab"><Icon name="close" size={9} /></PlainButton></Tab>
                <Spacer />
                <PlainButton aria-label="All tabs"><Icon name="chevron" size={8} /></PlainButton>
              </Tabs>
              <Viewer>
                <FloorPlan />
                <ScrollBar><Icon name="up" size={8} /><Thumb $gap={29} /><Icon name="chevron" size={8} /></ScrollBar>
              </Viewer>
              <StatusBar>
                <IconButton $dim aria-label="Single view"><Icon name="page" size={13} /></IconButton>
                <IconButton aria-label="Split vertical"><Icon name="splitv" size={13} /></IconButton>
                <IconButton aria-label="Split horizontal"><Icon name="splith" size={13} /></IconButton>
                <Divider />
                <IconButton aria-label="Fit page"><Icon name="fit" size={13} /></IconButton>
                <IconButton aria-label="Fit width"><Icon name="fitw" size={13} /></IconButton>
                <Spacer $grow={6} />
                <IconButton $active aria-label="Pan"><Icon name="hand" size={13} /></IconButton>
                <IconButton aria-label="Select"><Icon name="cursor" size={13} /></IconButton>
                <IconButton aria-label="Select text"><Icon name="textsel" size={13} /></IconButton>
                <IconButton aria-label="Zoom"><Icon name="zoom" size={13} /></IconButton>
                <ZoomSelect $width={62}>
                  <SelectBox aria-label="Zoom level"><option>183.60%</option></SelectBox>
                  <ZoomArrow><Icon name="chevron" size={8} /></ZoomArrow>
                </ZoomSelect>
                <IconButton $dim aria-label="First page"><Icon name="first" size={10} /></IconButton>
                <IconButton $dim aria-label="Previous page"><Icon name="prev" size={10} /></IconButton>
                <PageBox aria-label="Page" defaultValue="Floor Plan (1 of 8)" />
                <IconButton aria-label="Next page"><Icon name="next" size={10} /></IconButton>
                <IconButton aria-label="Last page"><Icon name="last" size={10} /></IconButton>
                <Divider />
                <IconButton aria-label="Previous view"><Icon name="back" size={14} /></IconButton>
                <IconButton $dim aria-label="Next view"><Icon name="forward" size={14} /></IconButton>
                <Spacer $grow={7} />
                <Info>42.00 x 30.00 in</Info>
                <Info>{'3.75 in = 30\'-0"'}</Info>
              </StatusBar>
            </DocArea>
          </Upper>

          <Lower>
            <Rail>
              <RailButton aria-label="Expand"><Icon name="more" size={8} /></RailButton>
              <RailButton $active aria-label="Markups"><Icon name="list" size={12} /></RailButton>
              <RailButton aria-label="Models"><Icon name="cube" /></RailButton>
              <RailButton aria-label="Scripts"><Icon name="script" /></RailButton>
            </Rail>
            <Markups>
              <MarkupsBar>
                <MarkupsTitle>Markups List <Icon name="chevron" size={8} /></MarkupsTitle>
                <PlainButton aria-label="Hide markups"><Icon name="eyeoff" size={13} /></PlainButton>
                <SearchBox>
                  <Icon name="search" size={10} />
                  <SearchInput placeholder="Search" />
                  <PlainButton aria-label="Clear search"><Icon name="close" size={8} /></PlainButton>
                </SearchBox>
                <PlainButton><Icon name="filter" size={10} />Filter List</PlainButton>
                <ShareButton aria-label="Export"><Icon name="share" size={12} /></ShareButton>
                <Spacer />
                <PlainButton aria-label="More"><Icon name="more" size={8} /></PlainButton>
              </MarkupsBar>
              <TableArea>
                <TableClip><MarkupsTable /></TableClip>
                <ScrollBar><Icon name="up" size={8} /><Thumb $gap={1} /><Icon name="chevron" size={8} /></ScrollBar>
              </TableArea>
            </Markups>
          </Lower>
        </Left>

        <ToolBar>
          {toolGroups.map((group, i) => (
            <ToolGroup key={i}>
              <Grip $height={group.grip} $solid={group.solid} />
              {group.tools.map((name) => (
                <ToolButton key={name} aria-label={name}>
                  <Icon name={name} size={13} />
                  {name === 'stamp' && <Icon name="chevron" size={8} />}
                </ToolButton>
              ))}
            </ToolGroup>
          ))}
          <OverflowButton $height={12} aria-label="More tools"><Icon name="chevron" size={8} /></OverflowButton>
        </ToolBar>
      </Body>
    </Window>
  );
};

export default App;
